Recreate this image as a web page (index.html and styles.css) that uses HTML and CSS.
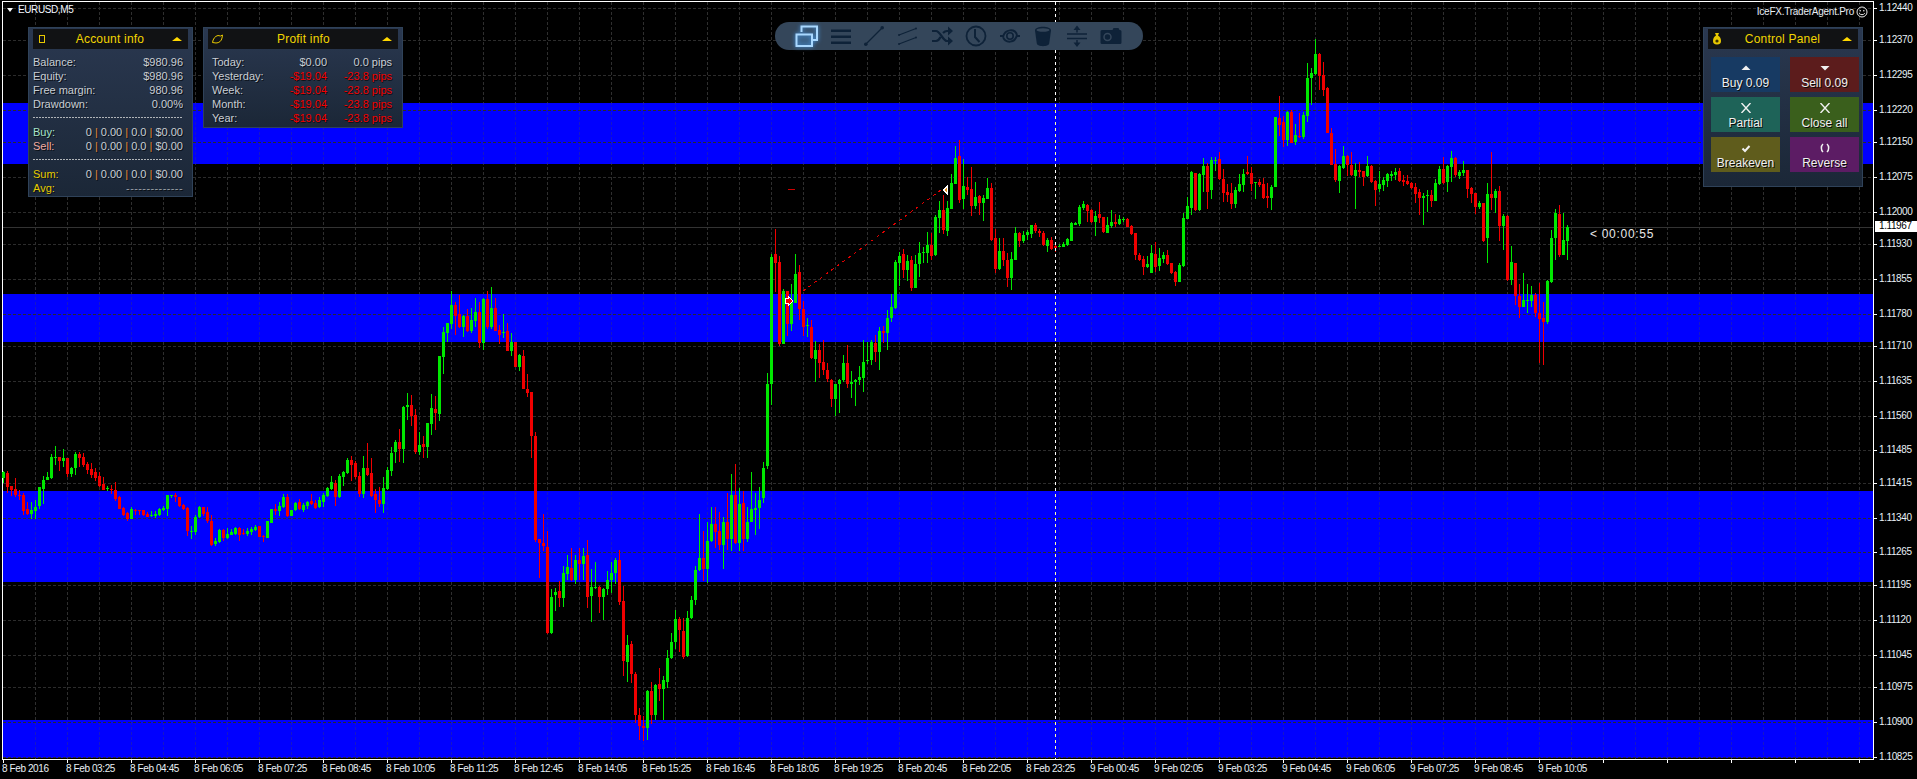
FILE: index.html
```html
<!DOCTYPE html>
<html lang="en">
<head>
<meta charset="utf-8">
<title>EURUSD,M5</title>
<link rel="stylesheet" href="styles.css">
</head>
<body>
<div class="app">
  <main class="plot">
    <svg id="chart" class="chart" viewBox="3 2 1870 757" width="1870" height="757"></svg>

    <div class="symbol"><i class="symbol-caret"></i>EURUSD,M5</div>
    <div class="brand">IceFX.TraderAgent.Pro
      <svg class="smile" viewBox="0 0 12 12" width="12" height="12"><circle cx="6" cy="6" r="5" fill="none" stroke="#e8e8e8"/><circle cx="4.2" cy="4.7" r=".8" fill="#e8e8e8"/><circle cx="7.8" cy="4.7" r=".8" fill="#e8e8e8"/><path d="M3.2 7.2c1.2 2 4.4 2 5.6 0" fill="none" stroke="#e8e8e8"/></svg>
    </div>
    <div class="countdown">&lt; 00:00:55</div>

    <section class="panel panel-account">
      <header class="panel-head">
        <svg class="head-icon" viewBox="0 0 12 12" width="12" height="12"><rect x="3.5" y="2.5" width="5" height="7" fill="none" stroke="#e8c800"/></svg>
        <h2>Account info</h2>
        <i class="caret"></i>
      </header>
      <div class="rows">
        <div class="row"><span>Balance:</span><span>$980.96</span></div>
        <div class="row"><span>Equity:</span><span>$980.96</span></div>
        <div class="row"><span>Free margin:</span><span>980.96</span></div>
        <div class="row"><span>Drawdown:</span><span>0.00%</span></div>
        <div class="sep"></div>
        <div class="row"><span class="buy">Buy:</span><span>0 <b>|</b> 0.00 <b>|</b> 0.0 <b>|</b> $0.00</span></div>
        <div class="row"><span class="sell">Sell:</span><span>0 <b>|</b> 0.00 <b>|</b> 0.0 <b>|</b> $0.00</span></div>
        <div class="sep"></div>
        <div class="row"><span class="sum">Sum:</span><span>0 <b>|</b> 0.00 <b>|</b> 0.0 <b>|</b> $0.00</span></div>
        <div class="row"><span class="sum">Avg:</span><span class="dash-fill">--------------</span></div>
      </div>
    </section>

    <section class="panel panel-profit">
      <header class="panel-head">
        <svg class="head-icon" viewBox="0 0 14 12" width="14" height="12"><path d="M1.5 9.5C2 6 4 3 7 2.5l2.5.5 2 -1-.5 3C10.500 8 8 10 5 10z" fill="none" stroke="#e8c800"/></svg>
        <h2>Profit info</h2>
        <i class="caret"></i>
      </header>
      <div class="rows">
        <div class="row3"><span>Today:</span><span>$0.00</span><span>0.0 pips</span></div>
        <div class="row3 loss"><span>Yesterday:</span><span>-$19.04</span><span>-23.8 pips</span></div>
        <div class="row3 loss"><span>Week:</span><span>-$19.04</span><span>-23.8 pips</span></div>
        <div class="row3 loss"><span>Month:</span><span>-$19.04</span><span>-23.8 pips</span></div>
        <div class="row3 loss"><span>Year:</span><span>-$19.04</span><span>-23.8 pips</span></div>
      </div>
    </section>

    <section class="panel panel-control">
      <header class="panel-head">
        <svg class="head-icon" viewBox="0 0 12 14" width="12" height="14"><path d="M4 1h4L7 3.500c2 1 3 3 3 5.500 0 2-1 3.500-4 3.500S2 11 2 9c0-2.500 1-4.500 3-5.500z" fill="#e8c800"/><circle cx="6" cy="9" r="1.600" fill="#3a3200"/></svg>
        <h2>Control Panel</h2>
        <i class="caret"></i>
      </header>
      <div class="buttons">
        <button class="btn btn-buy"><svg viewBox="0 0 12 10" width="12" height="10"><path d="M6 2.500l4.500 4.500h-9z" fill="#f0f0f0"/></svg>Buy 0.09</button>
        <button class="btn btn-sell"><svg viewBox="0 0 12 10" width="12" height="10"><path d="M1.500 3h9L6 7.500z" fill="#f0f0f0"/></svg>Sell 0.09</button>
        <button class="btn btn-partial"><svg viewBox="0 0 12 10" width="12" height="10"><path d="M1.500 0l9 10M10.500 0l-9 10" stroke="#f0f0f0" stroke-width="1.400" fill="none"/></svg>Partial</button>
        <button class="btn btn-close"><svg viewBox="0 0 12 10" width="12" height="10"><path d="M1.500 0l9 10M10.500 0l-9 10" stroke="#f0f0f0" stroke-width="1.400" fill="none"/></svg>Close all</button>
        <button class="btn btn-even"><svg viewBox="0 0 12 10" width="12" height="10"><path d="M2.500 5.500l2.500 2.500 4.500-5" stroke="#f0f0f0" stroke-width="2" fill="none"/></svg>Breakeven</button>
        <button class="btn btn-reverse"><svg viewBox="0 0 12 10" width="12" height="10"><path d="M4 1C1.800 3 1.800 7 4 9M8 1c2.200 2 2.200 6 0 8" stroke="#f0f0f0" stroke-width="1.500" fill="none"/></svg>Reverse</button>
      </div>
    </section>

    <nav class="toolbar">
      <span class="tool tool-active"><svg viewBox="0 0 24 24" width="24" height="24"><path d="M6.500 8V2.500h15.500v13.500h-5" fill="none" stroke="#a9d8ff" stroke-width="2"/><rect x="1.500" y="10.500" width="15.500" height="11.500" fill="#3f6f9c" fill-opacity=".25" stroke="#a9d8ff" stroke-width="2"/></svg></span>
      <span class="tool"><svg viewBox="0 0 24 24" width="24" height="24"><path d="M2 5.500h20v2.500H2zM2 11.500h20v2.500H2zM2 17.500h20v2.500H2z"/></svg></span>
      <span class="tool"><svg viewBox="0 0 24 24" width="24" height="24"><path d="M4 20L20 4" fill="none" stroke-width="1.200"/><circle cx="3.800" cy="20.200" r="1.800"/><circle cx="20.200" cy="3.800" r="1.800"/></svg></span>
      <span class="tool"><svg viewBox="0 0 24 24" width="24" height="24"><path d="M3 11l17-6.500M3 20l17-6.500" fill="none" stroke-width="1.100"/><circle cx="3" cy="11" r="1"/><circle cx="20" cy="4.500" r="1"/><circle cx="3" cy="20" r="1"/><circle cx="20" cy="13.500" r="1"/></svg></span>
      <span class="tool"><svg viewBox="0 0 24 24" width="24" height="24"><path d="M2 7h4c4 0 7 10 11 10h2M2 17h4c2 0 3.500-2 4.500-4M13 9c1-1 2.500-2 4-2h2" fill="none" stroke-width="2.200"/><path d="M18 2.500l5 4.500-5 4.500zM18 12.500l5 4.500-5 4.500z"/></svg></span>
      <span class="tool"><svg viewBox="0 0 24 24" width="24" height="24"><circle cx="12" cy="12" r="9.500" fill="none" stroke-width="1.800"/><path d="M11 5v8l4.500 5" fill="none" stroke-width="2"/></svg></span>
      <span class="tool"><svg viewBox="0 0 24 24" width="24" height="24"><path d="M2 12h3.500M18.500 12H22M5 13C7 4.500 17 4.500 19 11M5 13C7.500 19.500 17 19.500 19 11" fill="none" stroke-width="2"/><circle cx="12" cy="12" r="3.200" fill="none" stroke-width="1.600"/></svg></span>
      <span class="tool"><svg viewBox="0 0 24 24" width="24" height="24"><path d="M4 6.500c0-5 16-5 16 0l-1.800 13c-.5 3.500-11.900 3.500-12.400 0z"/><ellipse cx="12" cy="6" rx="6.500" ry="1.800" fill="#34465a"/></svg></span>
      <span class="tool"><svg viewBox="0 0 24 24" width="24" height="24"><path d="M2 10h20M2 14.500h20M12 5v3.500M12 16v3.500" fill="none" stroke-width="1.500"/><path d="M12 1.500l3.500 4.500h-7zM12 23l3.500-4.500h-7z"/></svg></span>
      <span class="tool"><svg viewBox="0 0 24 24" width="24" height="24"><path d="M3 6h10.500l1-2h5l1 2h.5a1.500 1.500 0 0 1 1.500 1.500v11A1.500 1.500 0 0 1 21 20H3a1.500 1.500 0 0 1-1.500-1.500v-11A1.500 1.500 0 0 1 3 6z"/><circle cx="8.500" cy="13" r="3.500" fill="none" style="stroke:#34465a" stroke-width="1.500"/></svg></span>
    </nav>
  </main>

  <aside id="yaxis" class="yaxis">
    <div class="price-tag">1.11967</div>
  </aside>

  <footer class="xaxis">
    <span>8 Feb 2016</span><span>8 Feb 03:25</span><span>8 Feb 04:45</span><span>8 Feb 06:05</span><span>8 Feb 07:25</span><span>8 Feb 08:45</span><span>8 Feb 10:05</span><span>8 Feb 11:25</span><span>8 Feb 12:45</span><span>8 Feb 14:05</span><span>8 Feb 15:25</span><span>8 Feb 16:45</span><span>8 Feb 18:05</span><span>8 Feb 19:25</span><span>8 Feb 20:45</span><span>8 Feb 22:05</span><span>8 Feb 23:25</span><span>9 Feb 00:45</span><span>9 Feb 02:05</span><span>9 Feb 03:25</span><span>9 Feb 04:45</span><span>9 Feb 06:05</span><span>9 Feb 07:25</span><span>9 Feb 08:45</span><span>9 Feb 10:05</span>
  </footer>
</div>
<script src="chart.js"></script>
</body>
</html>
```

FILE: styles.css
```css
* { box-sizing: border-box; }
html, body { margin: 0; height: 100%; background: #000; overflow: hidden; }
body { font-family: "Liberation Sans", Arial, sans-serif; color: #fff; }

.app {
  display: grid;
  grid-template-columns: 1872px 43px;
  grid-template-rows: 759px 19px;
  padding: 1px 0 0 2px;
  width: 1917px;
  height: 779px;
}

.plot { position: relative; border: 1px solid #fff; background: #000; }
.chart { display: block; overflow: visible; shape-rendering: crispEdges; }

.symbol, .brand, .xaxis, .yaxis { font-size: 10px; letter-spacing: -.4px; line-height: 10px; }

.symbol { position: absolute; left: 15px; top: 3px; color: #f4f8ff; white-space: nowrap; }
.symbol-caret {
  position: absolute; left: -11px; top: 3px;
  border: 3px solid transparent; border-top: 4px solid #fff;
  border-left-width: 3px; border-right-width: 3px;
}
.brand {
  position: absolute; right: 5px; top: 3px;
  display: flex; align-items: center; gap: 2px;
  letter-spacing: -.25px; color: #e8eef4; white-space: nowrap;
}
.smile { display: block; margin-top: 1px; }
.countdown {
  position: absolute; left: 1587px; top: 226px;
  font-size: 12px; line-height: 12px; letter-spacing: .7px; color: #e8e8e8; white-space: nowrap;
}

.panel {
  position: absolute; top: 25px;
  padding: 1px 4px 0;
  border: 1px solid #2f4259;
  background: linear-gradient(#2a3850, #1b2737);
  font-size: 11px; line-height: 14px; color: #c9ced4;
  text-shadow: 1px 1px 0 #0a0f16;
}
.panel-account { left: 25px; width: 165px; height: 170px; }
.panel-profit { left: 200px; width: 200px; height: 101px; }
.panel-control { right: 10px; width: 160px; height: 160px; }

.panel-head {
  display: flex; align-items: center;
  height: 20px; padding: 0 6px 0 3px;
  background: #111214;
}
.panel-head h2 {
  flex: 1; margin: 0; text-align: center;
  font-size: 12px; font-weight: normal; letter-spacing: .2px; color: #f2d500; text-shadow: none;
}
.head-icon { display: block; flex: none; }
.caret {
  flex: none; width: 0; height: 0;
  border: 5px solid transparent; border-top: 0; border-bottom: 4px solid #ffd700;
}

.rows { padding-top: 6px; }
.row { display: flex; justify-content: space-between; height: 14px; padding-right: 5px; white-space: nowrap; }
.row b { font-weight: normal; color: #e08a38; }
.row3 {
  display: grid; grid-template-columns: 64px 51px 65px;
  height: 14px; padding-left: 4px; white-space: nowrap;
}
.row3 span + span { text-align: right; }
.loss span + span { color: #f00000; }
.buy { color: #a6e4c8; }
.sell { color: #f2aca2; }
.sum { color: #e6cc00; }
.dash-fill { letter-spacing: .4px; color: #9aa0a6; }
.sep {
  height: 1px; margin: 6px 5px 7px 0;
  background: repeating-linear-gradient(90deg, #b0b4b8 0 2px, transparent 2px 3px);
}

.buttons {
  display: grid; grid-template-columns: 69px 69px; column-gap: 10px; row-gap: 5px;
  padding: 8px 0 0 3px;
}
.btn {
  display: flex; flex-direction: column; align-items: center;
  height: 35px; padding: 6px 0 0; border: 0; margin: 0;
  font: 12px/14px "Liberation Sans", Arial, sans-serif; color: #f0f0f0;
  text-shadow: 1px 1px 0 #0a0a0a;
}
.btn svg { display: block; margin-bottom: 3px; }
.btn-buy { background: #173a63; }
.btn-sell { background: #5c1c1c; }
.btn-partial { background: #1e6358; }
.btn-close { background: #3a5f1c; }
.btn-even { background: #5f5c1c; }
.btn-reverse { background: #5c1c64; }

.toolbar {
  position: absolute; left: 772px; top: 20px;
  display: flex; align-items: center;
  width: 368px; height: 28px; padding-left: 15px;
  border-radius: 14px; background: #34465a;
}
.tool { flex: 0 0 33.8px; display: flex; justify-content: center; }
.tool svg { display: block; fill: #0e2238; stroke: #0e2238; stroke-width: 0; }
.tool-active svg { filter: drop-shadow(0 0 2px #4aa0f0); }

.yaxis { position: relative; color: #e8f0f6; }
.yaxis span { position: absolute; left: 5px; white-space: nowrap; }
.price-tag {
  position: absolute; left: 1px; top: 220px; z-index: 1;
  width: 42px; height: 11px; padding-left: 4px;
  background: #fff; color: #000;
}

.xaxis { grid-column: 1 / 3; display: flex; padding-top: 4px; color: #e8f0f6; }
.xaxis span { flex: 0 0 64px; white-space: nowrap; }
```

FILE: chart.js
```js
(function () {
  var svg = document.getElementById('chart');
  var yaxis = document.getElementById('yaxis');
  var out = [];

  function rect(x, y, w, h, fill) {
    out.push('<rect x="' + x + '" y="' + y + '" width="' + w + '" height="' + h + '" fill="' + fill + '"/>');
  }
  function line(x1, y1, x2, y2, stroke, dash) {
    out.push('<line x1="' + x1 + '" y1="' + y1 + '" x2="' + x2 + '" y2="' + y2 + '" stroke="' + stroke + '"' +
      (dash ? ' stroke-dasharray="' + dash + '"' : '') + '/>');
  }

  var bands = [[103, 61], [294, 48], [491, 91], [720, 38]];
  var prices = ['1.12440', '1.12370', '1.12295', '1.12220', '1.12150', '1.12075', '1.12000', '1.11930',
    '1.11855', '1.11780', '1.11710', '1.11635', '1.11560', '1.11485', '1.11415', '1.11340', '1.11265',
    '1.11195', '1.11120', '1.11045', '1.10975', '1.10900', '1.10825'];

  out.push('<defs><clipPath id="bandclip">');
  bands.forEach(function (b) { rect(0, b[0], 1873, b[1], '#000'); });
  out.push('</clipPath></defs>');

  var x;
  for (x = 35; x < 1873; x += 32) line(x + .5, 2, x + .5, 759, '#2e2e2e', '3 2');
  bands.forEach(function (b) { rect(3, b[0], 1870, b[1], '#0000ff'); });
  out.push('<g clip-path="url(#bandclip)">');
  for (x = 35; x < 1873; x += 32) line(x + .5, 2, x + .5, 759, '#1616c8', '3 2');
  out.push('</g>');

  prices.forEach(function (p) {
    var y = Math.round(7.5 + (1.1244 - parseFloat(p)) * 46380);
    line(3, y + .5, 1873, y + .5, '#2c2c2c', '3 2');
    line(1873, y + .5, 1877, y + .5, '#fff');
    var s = document.createElement('span');
    s.textContent = p;
    s.style.top = (y - 6) + 'px';
    yaxis.appendChild(s);
  });
  for (x = 3; x < 1873; x += 64) line(x + .5, 759, x + .5, 763, '#fff');

  line(3, 227.5, 1873, 227.5, '#333');

  // Candles: colour + bodyTop,bodyBottom,high,low, in traced coordinates
  var segments = [
    [0, 270, 3, 'g605,623,603,640 r610,650,603,668 r649,659,649,678 r658,676,625,680 r676,678,660,690 r676,722,668,735 r718,731,695,735 g720,731,697,747 g712,722,690,747 g652,707,650,716 g630,656,618,702 g622,629,606,630 g561,623,552,627 g561,563,528,585 r562,572,560,603 g565,573,537,590 r565,611,563,622 g594,611,590,621 g552,593,545,614 r552,563,545,590 r562,584,548,590 r582,599,575,612 r598,614,580,625 r606,623,595,632 r619,647,605,650 r643,659,622,660 g654,656,648,662 r658,661,645,672 r660,686,636,692 r682,716,678,718 r715,735,712,738 r730,747,725,752 g718,746,712,748 r720,722,716,735 r721,723,720,735 r721,735,720,737 r732,740,725,742 g735,739,722,741 g732,737,722,744 g718,734,715,738 g715,719,708,722 g676,718,674,738 g676,678,675,684 r676,682,670,695 r682,707,680,710 r706,716,702,720 r714,782,712,798 g782,784,768,807 g741,785,735,795 g711,742,708,744 r712,732,710,738 r726,754,712,758 r754,824,735,828 g813,821,803,828 g781,815,778,818 r781,805,778,812 g793,803,775,808 g786,794,778,796 g774,792,770,796 r774,794,772,812 r789,791,778,796 g784,791,775,798 g777,786,772,796 g771,780,766,784 r768,800,768,802 r797,799,795,815 g754,803,752,805 g718,758,716,760 r718,723,702,735 g709,722,695,738 g682,712,672,715 r682,737,672,740 g721,737,720,738 g700,720,695,722 r696,718,688,720 g706,719,700,725 g697,707,692,718 r694,701,672,705 r699,713,690,716 g690,711,682,713 g676,695,668,712 g655,677,652,680 g637,656,618,660 r640,681,630,708 g618,681,612,684 g606,620,602,648 g570,609,565,613 r570,584,558,632 r580,620,572,628 r618,671,605,680 g595,671,558,684 r594,615,519,618 r610,677,564,680 r671,689,658,728 r690,701,652,712 g655,701,621,728 g600,657,590,660 g549,603,530,618 g516,545,510,580 r516,537,477,575 g411,536,408,578 g405,411,370,450 r405,437,376,468 r436,545,418,552 g526,545,485,555 r522,530,498,564 g460,530,458,564 g415,461,373,495 r418,429,378,480 g259,431,258,452 g186,260,172,312 g160,188,158,216 g105,161,63,178 r105,137,95,195 r132,170,75,175 g138,170,135,201 r138,183,118,186 g150,182,115,190 g126,152,85,170 r126,218,95,233 g87,218,85,240 r87,170,64,178 g114,170,52,176 r114,182,85,182 r180,194,166,222 g186,190,132,204 r184,242,160,244 g216,242,190,258 r216,290,215,292 g256,290,252,302'],
    [130, 210, 2.9, 'r424,519,405,520 r520,530,476,542 r529,655,528,720 r654,957,645,962 r955,966,955,1068 r965,975,883,988 r976,1227,930,1230 g1121,1227,1098,1230 g1107,1117,1095,1163 r1106,1126,1077,1150 g1054,1126,1032,1150 g1035,1057,1000,1074 r1038,1073,980,1075 g1014,1073,1000,1085 r1014,1027,980,1073 g1003,1027,980,1073 r1000,1122,958,1155 g1093,1120,1040,1195 g1093,1096,1022,1100 r1093,1122,1090,1170 g1100,1122,1095,1190 g1072,1100,1048,1117 g1052,1072,1020,1112 g1014,1052,1010,1085 r1014,1137,985,1145 r1133,1308,1090,1350 g1261,1311,1233,1370 r1258,1346,1250,1372 r1345,1465,1340,1488 r1465,1496,1445,1538 r1495,1502,1468,1540 g1395,1502,1393,1538 r1395,1465,1368,1492 g1377,1465,1375,1480 r1374,1390,1328,1423 g1363,1390,1350,1480 g1299,1370,1275,1385 g1252,1300,1228,1302 g1186,1253,1160,1272 r1186,1218,1180,1283 r1220,1296,1182,1303 g1183,1294,1163,1296 g1131,1184,1120,1186 g1043,1130,1032,1146 g1008,1044,883,1046 r1008,1040,932,1077 g959,1041,906,1083 g910,960,862,962 r912,935,862,980 r930,972,875,985 g904,972,890,1041 r904,954,822,987 g826,954,767,990 r826,966,736,968 g852,966,805,990 r850,955,815,988 g904,955,862,962 g868,905,760,905 g863,870,822,943 g840,865,803,926 g747,835,732,850 g506,743,473,752 g135,504,128,566 r128,153,55,238 r152,389,132,395 g236,389,230,390 r236,331,236,365 g265,331,215,350 g187,269,128,270 r181,287,160,320 r287,339,265,365 g334,337,312,368 r338,429,318,432 g405,432,380,498 r405,443,390,488 r442,464,376,478 r463,490,445,500 r492,548,490,571 g506,548,504,597 g492,506,490,588 g445,493,421,498 r445,504,392,516 g498,504,466,545 g492,498,490,568 g483,493,453,507 g440,486,376,527 g434,438,383,447 g384,434,378,449 r386,413,363,440 g352,413,340,465 r352,356,335,386 g312,356,290,407 g280,312,245,325 g152,284,145,286 g133,153,122,220'],
    [225, 130, 3, 'r372,420,358,445 g393,420,375,452 r391,473,378,482 g402,473,375,474 g370,402,336,440 g367,370,350,398 g346,370,306,398 r346,377,310,390 g262,375,255,378 g240,264,213,308 r240,299,195,313 g235,303,212,318 g160,236,133,238 g85,162,48,163 r78,209,30,218 g168,208,87,237 r171,179,140,195 r178,228,112,258 g202,228,155,236 r198,219,195,255 g205,218,195,273 g174,206,144,208 r174,330,160,333 r324,417,296,430 g363,417,325,420 r363,390,323,408 r390,443,368,470 g388,443,365,480 g309,389,292,391 r309,333,305,350 g316,333,304,340 g306,315,300,330 g286,312,284,324 r286,303,280,308 r303,309,296,320 r309,345,302,347 g331,347,325,366 r330,357,322,360 r348,353,340,365 g348,350,342,352 g343,350,336,352 g328,345,325,348 g280,332,276,334 g280,284,275,285 g232,282,225,288 g222,233,212,240 r225,243,222,276 r240,275,238,280 g259,275,242,318 r253,263,216,280 r262,305,262,308 g286,308,262,310 g276,288,240,295 r276,281,252,290 g267,281,256,285 g268,270,262,276 r267,291,265,292 r289,312,285,316 r309,375,308,390 r375,390,368,392 r387,411,378,436 g402,411,378,414 g370,428,345,430 r372,412,335,425 g385,408,355,424 g375,387,365,400 r375,402,360,404 r400,430,398,432 r426,455,424,468 g406,455,398,456 g264,408,250,410 g229,267,200,268 g126,233,122,255 r129,240,128,244 g132,240,130,242 g108,134,85,186 r108,185,100,237 g91,180,82,206 g91,93,82,122 r87,148,65,150 r148,188,118,215 r186,195,163,215 r190,221,160,237 g181,221,172,233 g162,183,132,186 g133,165,118,185 r126,132,78,135 r129,162,112,184 g157,160,155,207 r156,165,146,170 r163,204,145,207 r198,204,160,233 g172,203,165,240'],
    [318, 30, 3, 'g262,470,261,471 r265,285,198,318 r277,330,258,350 g246,330,243,348 r246,339,240,340 g316,336,282,345 r319,321,250,323 g256,320,247,327 g145,258,98,276 g130,144,114,225 g72,132,27,134 r72,137,68,180 r136,180,96,198 r174,308,172,310 r310,404,295,406 r403,450,358,456 g408,452,405,488 g378,414,348,416 r378,404,376,438 r405,435,365,437 g420,437,400,537 r420,426,396,440 r424,440,422,468 g408,437,378,440 r408,455,405,458 r454,479,450,528 g462,477,423,486 g450,464,440,483 g432,452,428,470 g432,437,424,452 g426,434,414,450 r424,452,414,455 r450,456,434,468 r453,462,435,466 r460,473,455,478 r472,491,460,520 r487,503,478,555 g498,505,488,585 g496,498,480,545 r496,512,480,530 g460,512,447,514 g418,461,408,465 r418,458,380,462 g409,455,405,486 g384,410,363,456 r384,436,380,440 g427,437,420,446 g421,429,393,437 r421,476,419,503 r475,491,472,520 r490,532,488,552 g520,530,512,537 r520,632,518,637 g493,623,460,698 r493,503,366,540 g484,503,477,548 r484,587,468,632 g559,587,552,660 r559,749,555,752 g697,749,648,765 r700,799,698,825 r799,830,763,863 g811,830,729,832 g811,813,762,850 g796,812,768,830 r796,850,790,862 r850,866,760,1000 r865,875,815,1005 g754,875,750,882 g625,755,600,758 g550,623,536,690 r552,675,525,680 g631,674,549,676 g592,634,585,690']
  ];
  var colours = { g: '#00e800', r: '#f00000' };

  segments.forEach(function (seg) {
    seg[3].split(' ').forEach(function (c, n) {
      var col = colours[c[0]];
      var v = c.slice(1).split(',').map(function (d) { return Math.round(seg[1] + d / seg[2]); });
      var cx = 3 + 4 * (seg[0] + n);
      rect(cx, v[2], 1, Math.max(1, v[3] - v[2]), col);
      rect(cx - 1, v[0], 3, Math.max(1, v[1] - v[0]), col);
    });
  });

  // Vertical marker line
  line(1055.5, 2, 1055.5, 759, '#fff', '3 3');
  out.push('<g clip-path="url(#bandclip)">');
  line(1055.5, 2, 1055.5, 759, '#ffffa8', '3 3');
  out.push('</g>');

  // Trade line and its markers
  line(803, 291, 941, 190, '#e00000', '3 4');
  line(788, 189.5, 795, 189.5, '#d00000');
  out.push('<polygon points="785,298 788,298 788,296 794,301 788,306 788,304 785,304" fill="#fff"/>');
  out.push('<polygon points="786,299 789,299 789,298 792.500,301 789,304 789,303 786,303" fill="#f00000"/>');
  out.push('<polygon points="942,190 948,185 948,195" fill="#fff"/>');
  out.push('<polygon points="944,190 947,187.500 947,192.500" fill="#e0901c"/>');

  svg.innerHTML = out.join('');
})();
```
